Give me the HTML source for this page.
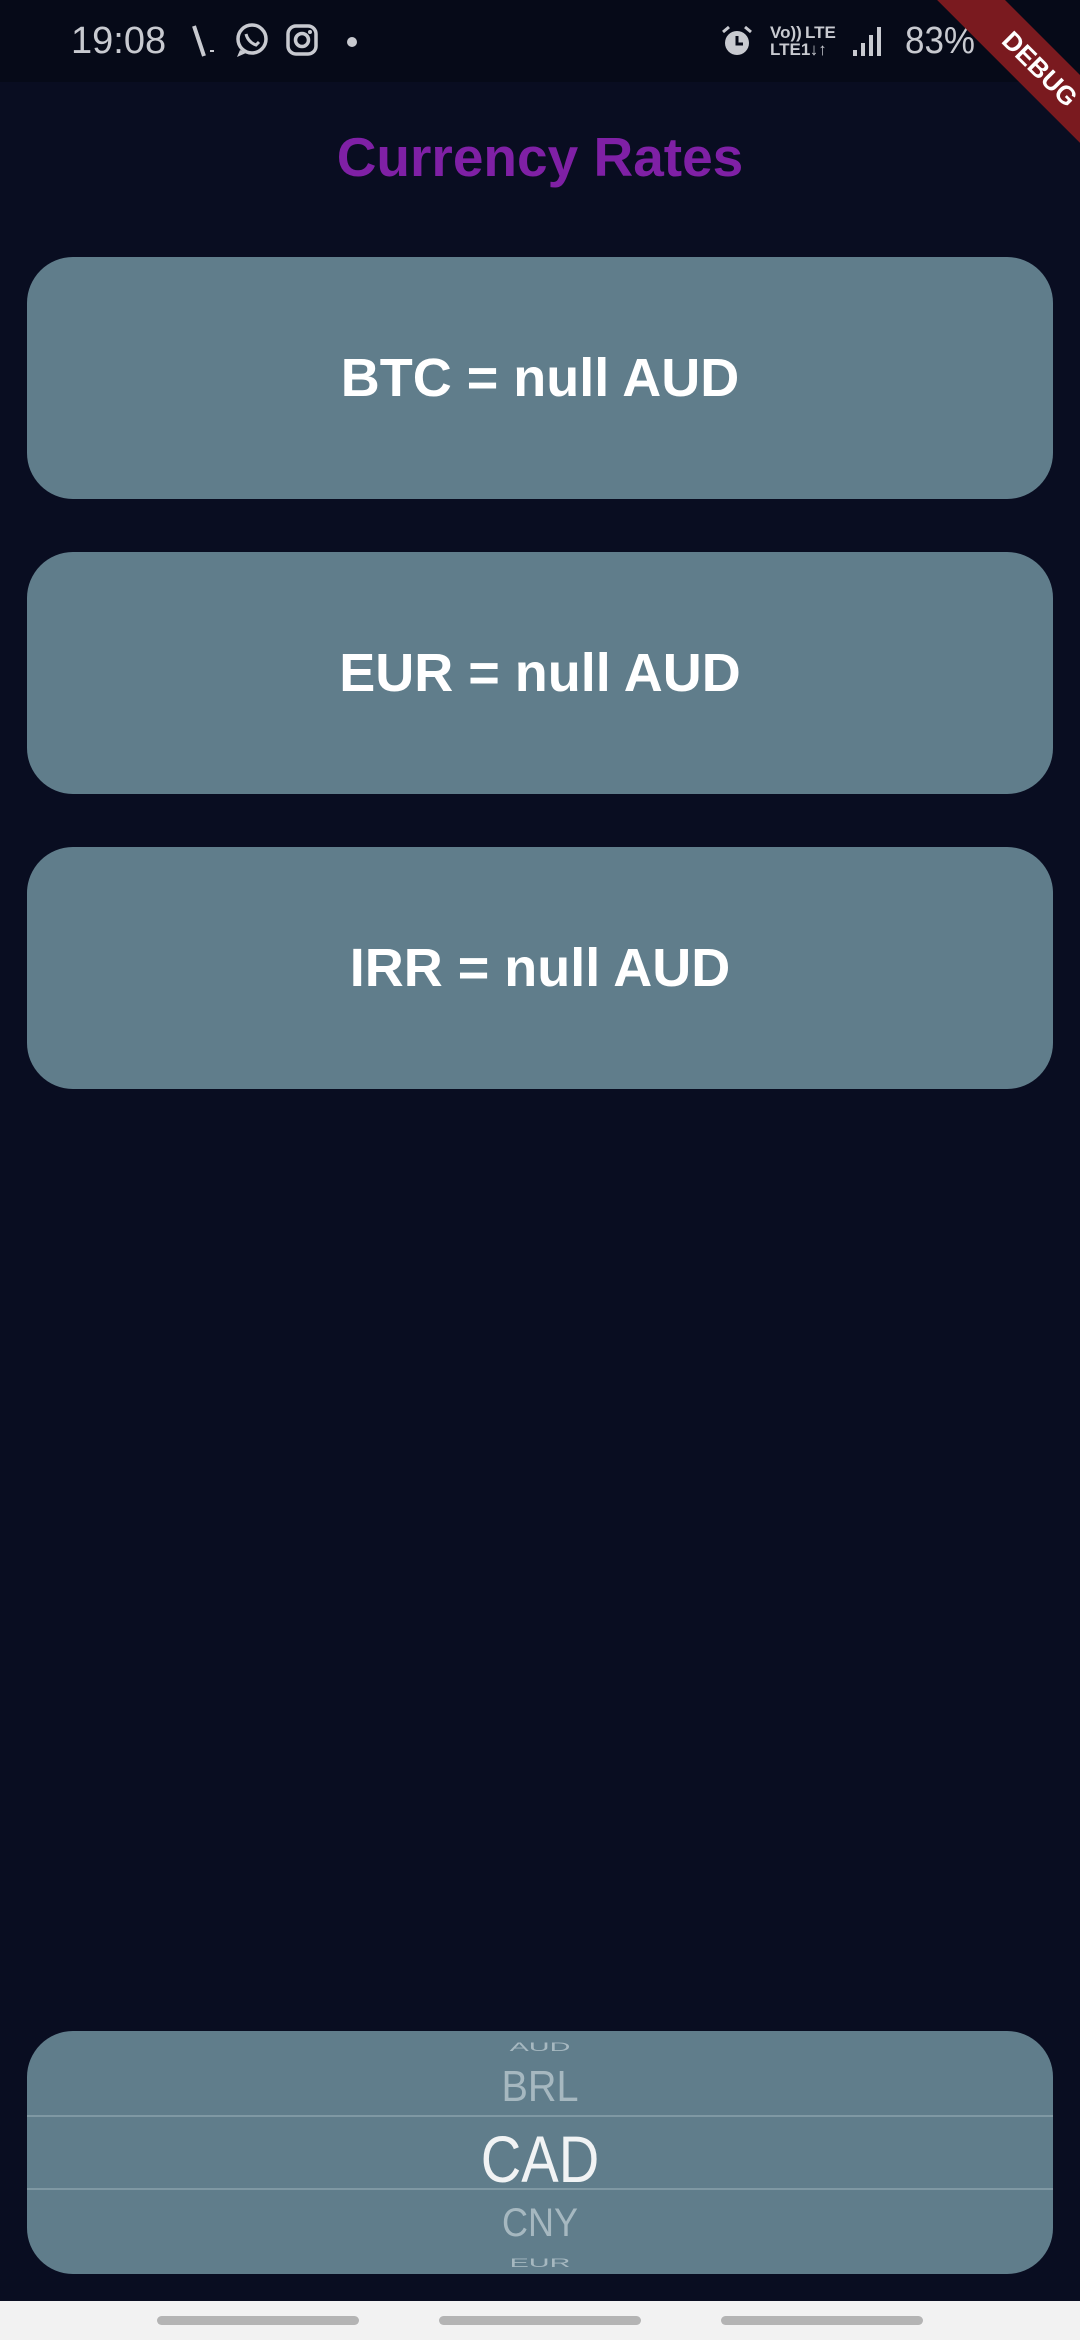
<!DOCTYPE html>
<html><head><style>
*{margin:0;padding:0;box-sizing:border-box}
body{width:1080px;height:2340px;background:#090d21;font-family:"Liberation Sans",sans-serif;position:relative;overflow:hidden}
.sb{position:absolute;left:0;top:0;width:1080px;height:82px;background:#060a18;color:#c8cad0}
.title{position:absolute;top:124px;left:0;width:1080px;text-align:center;color:#7f20a5;font-weight:bold;font-size:55px;line-height:66px}
.card{position:absolute;left:27px;width:1026px;height:242px;background:#607d8b;border-radius:46px;color:#fff;font-weight:bold;font-size:54px;display:flex;align-items:center;justify-content:center}
.card span{display:block}
.pk{position:absolute;left:27px;top:2031px;width:1026px;height:243px;background:#607d8b;border-radius:46px;overflow:hidden;text-align:center}
.pk div{position:absolute;left:0;width:100%;color:#a6b8c0}
.nav{position:absolute;left:0;top:2301px;width:1080px;height:39px;background:#f2f2f2}
.pill{position:absolute;top:15px;width:202px;height:9px;border-radius:5px;background:#b4b4b4}
</style></head><body>
<div class="sb">
<div style="position:absolute;left:71px;top:20px;font-size:38px">19:08</div>
<svg style="position:absolute;left:190px;top:24px" width="30" height="36"><path d="M4 2 L14 32 M22 26 l0 2" stroke="#c8cad0" stroke-width="4" fill="none"/></svg>
<svg style="position:absolute;left:234px;top:22px" width="36" height="36"><circle cx="18" cy="17" r="14" stroke="#c8cad0" stroke-width="3.5" fill="none"/><path d="M6 28 L3 35 L12 31" fill="#c8cad0"/><path d="M12 12 q2 8 10 11 l3-3" stroke="#c8cad0" stroke-width="3" fill="none"/></svg>
<svg style="position:absolute;left:286px;top:24px" width="34" height="34"><rect x="2" y="2" width="28" height="28" rx="8" stroke="#c8cad0" stroke-width="3.5" fill="none"/><circle cx="16" cy="16" r="6.5" stroke="#c8cad0" stroke-width="3.5" fill="none"/><circle cx="24" cy="8" r="2" fill="#c8cad0"/></svg>
<div style="position:absolute;left:347px;top:37px;width:10px;height:10px;border-radius:50%;background:#c8cad0"></div>
<svg style="position:absolute;left:720px;top:24px" width="34" height="34"><circle cx="17" cy="19" r="12" fill="#c8cad0"/><path d="M17 12 v8 h6" stroke="#060a18" stroke-width="3" fill="none"/><path d="M3 8 l6-5 M31 8 l-6-5" stroke="#c8cad0" stroke-width="3"/></svg>
<div style="position:absolute;left:770px;top:24px;font-size:17px;font-weight:bold;line-height:17px">Vo))<br>LTE1</div>
<div style="position:absolute;left:805px;top:24px;font-size:17px;font-weight:bold;line-height:17px">LTE<br>&nbsp;↓↑</div>
<svg style="position:absolute;left:852px;top:26px" width="30" height="32"><rect x="1" y="24" width="4" height="6" fill="#c8cad0"/><rect x="9" y="17" width="4" height="13" fill="#c8cad0"/><rect x="17" y="9" width="4" height="21" fill="#c8cad0"/><rect x="25" y="1" width="4" height="29" fill="#c8cad0"/></svg>
<div style="position:absolute;left:905px;top:20px;font-size:38px;transform:scaleX(0.92);transform-origin:left">83%</div>
</div>
<div style="position:absolute;width:260px;height:48px;background:#7a1a1f;transform:rotate(45deg);transform-origin:0 0;left:965px;top:-40px;color:#fff;font-weight:bold;font-size:26px;text-align:center;line-height:48px">DEBUG</div>
<div class="title">Currency Rates</div>
<div class="card" style="top:257px"><span>BTC = null AUD</span></div>
<div class="card" style="top:552px"><span>EUR = null AUD</span></div>
<div class="card" style="top:847px"><span>IRR = null AUD</span></div>
<div class="pk">
<div style="top:8px;font-size:16px;transform:scale(1.8,0.75)">AUD</div>
<div style="top:31px;font-size:44px;transform:scaleX(0.9)">BRL</div>
<div style="top:84px;height:2px;background:#7f98a3"></div>
<div style="top:90px;font-size:66px;color:#f1f3f4;transform:scaleX(0.85)">CAD</div>
<div style="top:157px;height:2px;background:#7f98a3"></div>
<div style="top:170px;font-size:40px;transform:scaleX(0.9)">CNY</div>
<div style="top:224px;font-size:16px;transform:scale(1.8,0.75)">EUR</div>
</div>
<div class="nav"><div class="pill" style="left:157px"></div><div class="pill" style="left:439px"></div><div class="pill" style="left:721px"></div></div>
</body></html>
